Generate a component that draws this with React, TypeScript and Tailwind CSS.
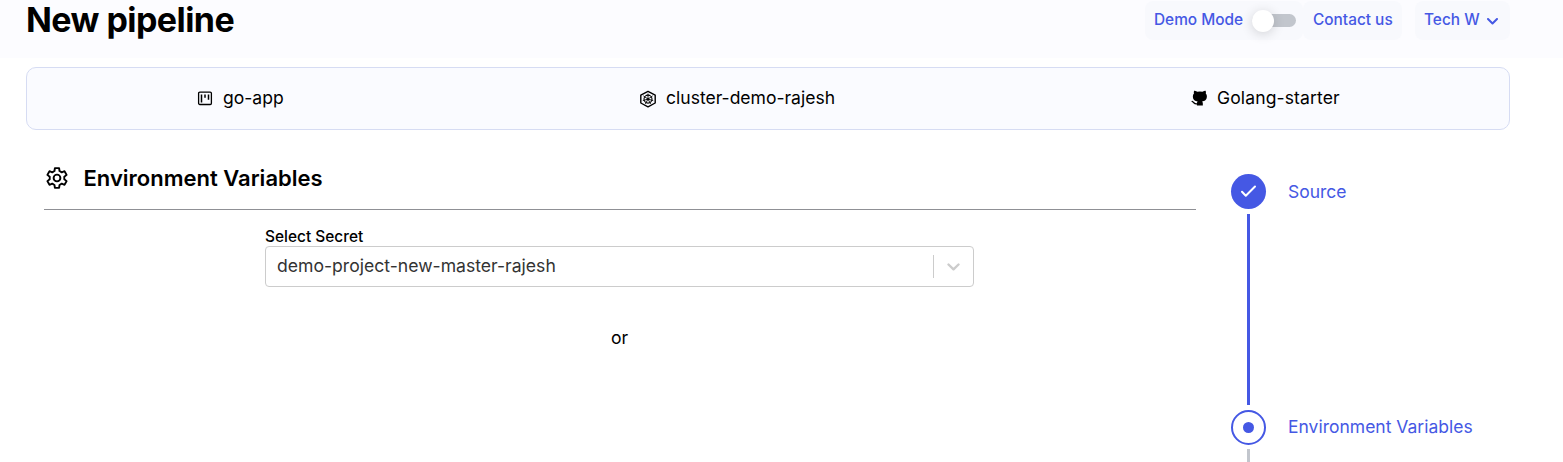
import React from "react";

function BoardIcon() {
  return (
    <svg className="mr-[10px] h-[15px] w-4" viewBox="0 0 16 15" fill="none" stroke="currentColor">
      <rect x="1.6" y="1.1" width="12.8" height="12.4" rx="1.2" strokeWidth="1.3" />
      <path d="M4.5 3.5v8M8 3.5v3.2M11.5 3.5v5.2" strokeWidth="1.5" />
    </svg>
  );
}

function ClusterIcon() {
  return (
    <svg className="mr-[9px] size-[18px]" viewBox="0 0 18 18" fill="none" stroke="currentColor">
      <path d="M9 1.4l7.2 3.8v7.8L9 16.8 1.8 13V5.2z" strokeWidth="1.4" strokeLinejoin="round" />
      <circle cx="9" cy="9.1" r="4" strokeWidth="1.1" />
      <path d="M9 9.1V3.6M9 9.1l4.6-3.2M9 9.1l-4.6-3.2M9 9.1l5.2 1.5M9 9.1l-5.2 1.5M9 9.1l2.6 4.8M9 9.1l-2.6 4.8" strokeWidth="0.9" />
      <circle cx="9" cy="9.1" r="0.9" fill="currentColor" stroke="none" />
    </svg>
  );
}

function OctocatIcon() {
  return (
    <svg className="mr-[9px] size-[17px]" viewBox="0.5 0 23 23" fill="none">
      <path
        fill="currentColor"
        d="M16.5 21v-2.87a3.37 3.37 0 0 0-.94-2.61c3.14-.35 6.44-1.54 6.44-7A5.44 5.44 0 0 0 20.5 4.77 5.07 5.07 0 0 0 20.2 1S18.73.65 16 2.48a13.38 13.38 0 0 0-7 0C6.27.65 4.8 1 4.8 1A5.07 5.07 0 0 0 4.5 4.77a5.44 5.44 0 0 0-1.5 3.78c0 5.42 3.3 6.61 6.44 7A3.37 3.37 0 0 0 8.5 18.13V21z"
      />
      <path d="M9.5 18.7c-5 1.3-5.2-2.7-7.5-3.2" stroke="currentColor" strokeWidth="1.7" strokeLinecap="round" />
    </svg>
  );
}

const gearPoints = [0, 60, 120, 180, 240, 300]
  .flatMap((tooth) =>
    [
      [-20, 7.4],
      [-12, 10.1],
      [12, 10.1],
      [20, 7.4],
    ].map(([offset, radius]) => {
      const a = ((tooth + offset) * Math.PI) / 180;
      return `${(12 + radius * Math.sin(a)).toFixed(2)},${(12 - radius * Math.cos(a)).toFixed(2)}`;
    }),
  )
  .join(" ");

function GearIcon() {
  return (
    <svg className="mr-[14.5px] ml-px size-6" viewBox="0 0 24 24" fill="none" stroke="currentColor" strokeWidth="1.9" strokeLinejoin="round">
      <polygon points={gearPoints} />
      <circle cx="12" cy="12" r="3.4" />
    </svg>
  );
}

function TopBar() {
  return (
    <header className="flex h-[58px] items-start justify-between bg-[#fcfcff] pl-[26px] pr-[53px]">
      <h1 className="text-[34px] font-bold leading-[40px] tracking-[-0.56px] text-black">New pipeline</h1>
      <div className="flex pt-px text-[15.4px] font-medium text-[#4558e4]">
        <div className="flex h-[39px] w-[158px] items-center rounded-lg bg-[#f8f9fd] pl-[9px]">
          <span className="w-[98px] pb-[2px] whitespace-nowrap">Demo Mode</span>
          <span className="flex h-[13px] w-[44px] items-center rounded-full bg-[#c2c6cd]">
            <span className="size-[22px] shrink-0 rounded-full bg-white shadow-[0_2px_12px_rgba(0,0,0,0.16)]" />
          </span>
        </div>
        <div className="flex h-[39px] w-[99px] items-center rounded-lg bg-[#f8f9fd] pb-[2px] pl-[10px] whitespace-nowrap">Contact us</div>
        <div className="ml-[13px] flex h-[39px] w-[95px] items-center rounded-lg bg-[#f8f9fd] pl-[9px]">
          <span className="w-[63px] pb-[2px] whitespace-nowrap">Tech W</span>
          <svg className="mt-0.5 h-[7px] w-[11px]" viewBox="0 0 11 7" fill="none" stroke="currentColor" strokeWidth="2" strokeLinecap="round" strokeLinejoin="round">
            <path d="M1 1l4.5 4.5L10 1" />
          </svg>
        </div>
      </div>
    </header>
  );
}

function Summary() {
  return (
    <section className="ml-[26px] mt-[9px] flex h-[63px] w-[1484px] items-center rounded-[10px] border border-[#d6dcf3] bg-[#fafbff] text-[17.55px] text-black">
      <div className="flex w-[442px] items-center pl-[170px]">
        <BoardIcon />
        <span>go-app</span>
      </div>
      <div className="flex w-[551px] items-center pl-[170px]">
        <ClusterIcon />
        <span>cluster-demo-rajesh</span>
      </div>
      <div className="flex items-center pl-[171px]">
        <OctocatIcon />
        <span className="tracking-[0.12px]">Golang-starter</span>
      </div>
    </section>
  );
}

function SecretForm() {
  return (
    <main className="ml-[44px] w-[1152px]">
      <div className="flex h-[80px] items-center border-b border-[#8f9095] pt-4">
        <GearIcon />
        <h2 className="text-[22px] font-semibold leading-7 text-black">Environment Variables</h2>
      </div>
      <div className="ml-[221px] w-[709px] pt-[17px]">
        <label className="block text-[15.45px] font-medium leading-[19px] text-black">Select Secret</label>
        <div className="flex h-[41px] items-center rounded border border-[#cccccc] bg-white">
          <span className="flex-1 pl-[11px] text-[17.6px] text-[#333333]">demo-project-new-master-rajesh</span>
          <span className="h-[23px] w-px bg-[#cccccc]" />
          <span className="flex w-[39px] justify-center">
            <svg className="h-[8px] w-[13px]" viewBox="0 0 13 8" fill="none" stroke="#cccccc" strokeWidth="2.4" strokeLinecap="round" strokeLinejoin="round">
              <path d="M1.5 1.5l5 4.8 5-4.8" />
            </svg>
          </span>
        </div>
        <p className="pt-[38px] text-center text-[17.6px] leading-[26px] text-black">or</p>
      </div>
    </main>
  );
}

function Steps() {
  return (
    <aside className="ml-[35px] mt-[44px] text-[17.5px] text-[#4558e4]">
      <div className="flex h-[35px] items-center">
        <span className="mr-[22px] flex size-[35px] items-center justify-center rounded-full bg-[#4558e4]">
          <svg className="h-[13px] w-[17px]" viewBox="0 0 17 13" fill="none" stroke="white" strokeWidth="2" strokeLinecap="round" strokeLinejoin="round">
            <path d="M2 6.8l3.8 4L15 1.5" />
          </svg>
        </span>
        <span className="pt-[2px]">Source</span>
      </div>
      <div className="ml-4 mt-[5px] h-[191px] w-[3px] bg-[#4558e4]" />
      <div className="mt-[5px] flex h-[35px] items-center">
        <span className="mr-[22px] flex size-[35px] items-center justify-center rounded-full border-2 border-[#4558e4]">
          <span className="size-[11px] rounded-full bg-[#4558e4]" />
        </span>
        <span>Environment Variables</span>
      </div>
      <div className="ml-4 mt-[4px] h-[13px] w-[3px] bg-[#c2c6cd]" />
    </aside>
  );
}

export default function App() {
  return (
    <div className="h-[462px] w-full overflow-hidden bg-white font-['Inter',sans-serif]">
      <TopBar />
      <Summary />
      <div className="flex items-start">
        <SecretForm />
        <Steps />
      </div>
    </div>
  );
}
